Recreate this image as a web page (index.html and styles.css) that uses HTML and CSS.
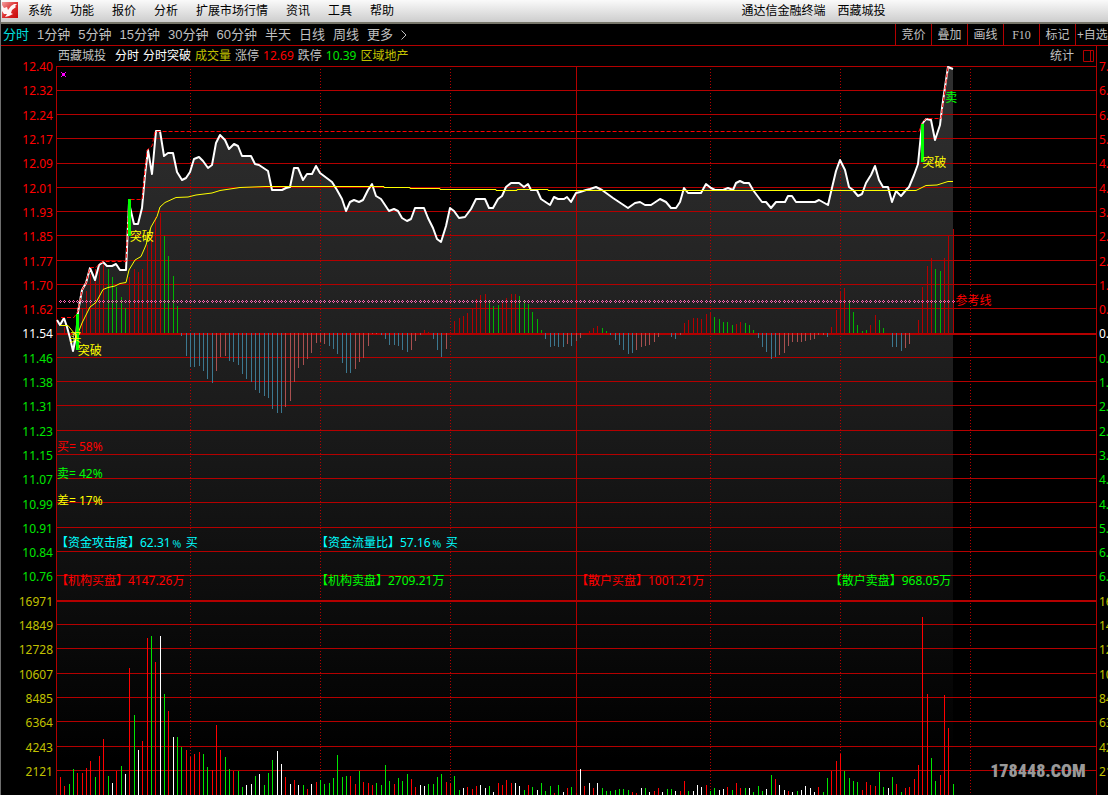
FILE: index.html
```html
<!DOCTYPE html>
<html lang="zh-CN">
<head>
<meta charset="utf-8">
<title>通达信金融终端 西藏城投</title>
<link rel="stylesheet" href="styles.css">
</head>
<body>
<div class="app">
  <header class="menubar">
    <svg class="logo" viewBox="0 0 16 16" aria-hidden="true">
      <defs><linearGradient id="logoRed" x1="0" y1="0" x2="1" y2="1"><stop offset="0" stop-color="#f3a0a0"/><stop offset=".5" stop-color="#dc3030"/><stop offset="1" stop-color="#c80808"/></linearGradient></defs>
      <rect width="16" height="16" fill="url(#logoRed)"/>
      <path d="M0 3L2 6L5 5L6 8L9 4L12 2L15 2L13 4L14 5L10 8L9 11L11 12L7 14L3 15L5 12L2 12L0 9Z" fill="#fff5f5"/>
    </svg>
    <nav class="menu">
      <button>系统</button><button>功能</button><button>报价</button><button>分析</button><button>扩展市场行情</button><button>资讯</button><button>工具</button><button>帮助</button>
    </nav>
    <h1 class="title"><span>通达信金融终端</span><span>西藏城投</span></h1>
  </header>

  <div class="toolbar">
    <nav class="periods">
      <button class="active">分时</button><button>1分钟</button><button>5分钟</button><button>15分钟</button><button>30分钟</button><button>60分钟</button><button>半天</button><button>日线</button><button>周线</button><button>更多</button>
      <button aria-label="展开"><svg class="chevron" viewBox="0 0 6 10"><path d="M.5 .5L5 5L.5 9.500"/></svg></button>
    </nav>
    <div class="tools">
      <button>竞价</button><button>叠加</button><button>画线</button><button class="latin">F10</button><button>标记</button><button class="last">+自选</button>
    </div>
  </div>

  <main class="workspace">
    <ol class="axis axis-left" id="axisLeft"></ol>
    <section class="center">
      <div class="info">
        <span class="stock">西藏城投</span>
        <span class="white">分时</span>
        <span class="white">分时突破</span>
        <span class="olive">成交量</span>
        <span>涨停</span><span class="up num">12.69</span>
        <span>跌停</span><span class="down num">10.39</span>
        <span class="olive">区域地产</span>
        <button class="stat">统计</button>
        <button class="pane" aria-label="侧栏"><svg viewBox="0 0 11 12"><path d="M.5 .5H10.500V11.500H.5ZM7.500 .5V11.500"/></svg></button>
      </div>
      <div class="plot">
        <svg id="chart" class="chart" viewBox="56 66 1040 729" preserveAspectRatio="none" role="img" aria-label="分时走势与成交量">
          <defs><linearGradient id="shade" gradientUnits="userSpaceOnUse" x1="0" y1="66" x2="0" y2="760"><stop offset="0" stop-color="#303030"/><stop offset=".5" stop-color="#1b1b1b"/><stop offset="1" stop-color="#000"/></linearGradient></defs>
          <path id="area" fill="url(#shade)"/>
          <g id="grid" class="grid"></g>
          <g id="osc" class="bars"></g>
          <g id="vol" class="bars"></g>
          <path id="ref" class="refline"/>
          <path id="price" class="price"/>
          <path class="average" d="M60 325.500H68L74 333L77 336L82 323L90 307L96 302.500L103 289.500L108 287.500L115 286L120 283.500L126 282.500L129 270L135 260L141 256.500L146 245L151 227L157 216.500L160 207L165 202.500L176 197.500L188 197L196 195L212 193L220 190.500L240 187.500L266 186.500H384V187.500H410V188.500H440V189.500H496V190.500H517V189.500H548V190.500H916L926 185.500L937 185L948 181.500H953"/>
          <path class="high" d="M61 317.500H74L78 311L82 290L86 283L90 267.500H96L100 263L104 261.500H126L129 199.500H142L147 150L152 146L155 131.500H919L922 123L926 118.500H941L948 67"/>
          <path class="breakout" d="M76 314h3v36h-3zM128 199h3v37h-3zM921 124h3v38h-3z"/>
          <path class="marker" d="M61 72h1v1h-1zM65 72h1v1h-1zM62 73h3v3h-3zM61 76h1v1h-1zM65 76h1v1h-1z"/>
        </svg>
        <span class="tag yellow" id="t1">买</span>
        <span class="tag yellow" id="t2">突破</span>
        <span class="tag yellow" id="t3">突破</span>
        <span class="tag yellow" id="t4">突破</span>
        <span class="tag lime" id="t5">卖</span>
        <span class="tag red" id="t6">参考线</span>
        <ul class="ratio">
          <li class="red">买= 58%</li>
          <li class="lime">卖= 42%</li>
          <li class="yellow">差= 17%</li>
        </ul>
        <div class="flows flows-main"><span class="cyan">【资金攻击度】62.31﹪ 买</span><span class="cyan">【资金流量比】57.16﹪ 买</span></div>
        <div class="flows flows-orders"><span class="red">【机构买盘】4147.26万</span><span class="lime">【机构卖盘】2709.21万</span><span class="red">【散户买盘】1001.21万</span><span class="lime">【散户卖盘】968.05万</span></div>
        <span class="watermark">178448.COM</span>
      </div>
    </section>
    <ol class="axis axis-right" id="axisRight"></ol>
  </main>
</div>
<script src="chart.js"></script>
</body>
</html>
```
FILE: styles.css
```css
* { box-sizing: border-box; }
body {
  margin: 0;
  background: #000;
  color: #c0c0c0;
  font: 12px/16px "Noto Sans", "Noto Sans CJK SC", sans-serif;
}
button {
  padding: 0;
  border: 0;
  background: none;
  color: inherit;
  font: inherit;
  white-space: nowrap;
}
ol, ul { margin: 0; padding: 0; list-style: none; }

.app {
  display: flex;
  flex-direction: column;
  height: 100vh;
  overflow: hidden;
  border-left: 1px solid #6e6e6e;
}

.menubar {
  display: flex;
  align-items: center;
  flex: none;
  height: 24px;
  padding: 0 20% 0 1px;
  border-bottom: 2px solid #77766a;
  background: linear-gradient(#fafafa, #cdcdcd);
  color: #000;
}
.logo { width: 16px; height: 16px; margin-bottom: 2px; }
.menu { display: flex; gap: 18px; margin-left: 10px; }
.title {
  display: flex;
  gap: 12px;
  margin: 0 1px 0 auto;
  font-size: 12px;
  line-height: 16px;
  font-weight: 400;
}

.toolbar {
  display: flex;
  justify-content: space-between;
  flex: none;
  height: 22px;
  border-bottom: 1px solid #b40000;
}
.periods {
  display: flex;
  align-items: center;
  gap: 8px;
  padding-left: 2px;
  font-family: "Liberation Sans", "Noto Sans CJK SC", sans-serif;
  font-size: 13px;
}
.active { color: #00e0e0; }
.chevron { display: block; width: 6px; height: 10px; fill: none; stroke: #c0c0c0; }
.tools { display: flex; }
.tools button { width: 36px; border-left: 1px solid #b40000; }
.tools .last { width: 33px; padding-left: 1px; text-align: left; }
.tools .latin { font-family: "Liberation Serif", serif; }

.workspace {
  display: grid;
  grid-template-columns: 55px minmax(0, 1fr) 11px;
  flex: 1;
  min-height: 0;
}
.axis {
  display: grid;
  grid-auto-rows: 1fr;
  align-items: center;
  padding: 9px 0 11px;
}
.axis li { line-height: 16px; }
.axis-left { padding-right: 3px; text-align: right; }
.axis-right { padding-left: 2px; overflow: hidden; }

.center {
  display: flex;
  flex-direction: column;
  border-right: 1px solid #b40000;
}
.info {
  display: flex;
  align-items: center;
  flex: none;
  gap: 4px;
  height: 20px;
  padding: 0 2px;
  white-space: nowrap;
}
.stock { margin-right: 5px; }
.stat { margin-left: auto; }
.pane svg { display: block; width: 11px; height: 12px; margin-left: 5px; fill: none; stroke: #b40000; }
.white { color: #fff; }
.olive { color: #c0c000; }
.up, .red { color: #f00; }
.down { color: #00e600; }
.lime { color: #0f0; }
.yellow { color: #ff0; }
.cyan { color: #0ff; }

.plot { position: relative; flex: 1; min-height: 0; }
.chart { position: absolute; inset: 0; width: 100%; height: 100%; }
.grid, .bars, .breakout, .marker, .refline { shape-rendering: crispEdges; }
.grid { fill: none; stroke: #b40000; }
.dotted { stroke-dasharray: 1 2; }
.price { fill: none; stroke: #fff; stroke-width: 2; stroke-linejoin: round; }
.average { fill: none; stroke: #ff0; }
.high { fill: none; stroke: #f00; stroke-dasharray: 4 2; }
.breakout { fill: #0f0; }
.marker { fill: #f0f; }
.refline { fill: #ff64b4; }

.tag { position: absolute; line-height: 14px; white-space: nowrap; }
#t1 { left: 1.3%; top: 36.3%; }
#t2 { left: 2.1%; top: 38.1%; }
#t3 { left: 7.1%; top: 22.5%; }
#t4 { left: 83.3%; top: 12.3%; }
#t5 { left: 85.5%; top: 3.4%; }
#t6 { left: 86.5%; top: 31.3%; }

.ratio {
  position: absolute;
  top: 51.2%;
  left: 1px;
  display: grid;
  gap: 11px;
}
.flows {
  position: absolute;
  right: 0;
  left: 0;
  display: grid;
  grid-template-columns: 25% 25% 24.4% 1fr;
  white-space: nowrap;
}
.flows-main { top: 64.3%; }
.flows-orders { top: 69.5%; }
.watermark {
  position: absolute;
  right: 1%;
  bottom: 1.6%;
  color: #999;
  font: 900 18px/24px "Roboto Condensed", "Liberation Sans", sans-serif;
}
```
FILE: chart.js
```js
const NS = 'http://www.w3.org/2000/svg';
const byId = id => document.getElementById(id);

// Axes
const prices = '12.40 12.32 12.24 12.17 12.09 12.01 11.93 11.85 11.77 11.70 11.62 11.54 11.46 11.38 11.31 11.23 11.15 11.07 10.99 10.91 10.84 10.76'.split(' ');
const volumes = '16971 14849 12728 10607 8485 6364 4243 2121'.split(' ');
function label(list, text, color) {
  const li = document.createElement('li');
  li.textContent = text;
  li.className = color;
  list.append(li);
}
prices.forEach((p, i) => {
  const color = i < 11 ? 'up' : i > 11 ? 'down' : 'white';
  label(byId('axisLeft'), p, color);
  label(byId('axisRight'), (Math.abs(11 - i) * 0.676).toFixed(2) + '%', color);
});
volumes.forEach(v => {
  label(byId('axisLeft'), v, 'olive');
  label(byId('axisRight'), v, 'olive');
});

// Grid
function stroke(parent, d, width, cls) {
  const p = document.createElementNS(NS, 'path');
  p.setAttribute('d', d);
  p.setAttribute('stroke-width', width);
  if (cls) p.setAttribute('class', cls);
  parent.append(p);
  return p;
}
[66, 90, 114, 138, 163, 187, 211, 235, 260, 284, 308, 357, 381, 405, 430, 454, 478, 502, 527, 551, 575, 624, 648, 673, 697, 721, 746, 770]
  .forEach(y => stroke(byId('grid'), `M56 ${y + 0.5}H1096`, 1));
[334, 601].forEach(y => stroke(byId('grid'), `M56 ${y}H1096`, 2));
[56, 576].forEach(x => stroke(byId('grid'), `M${x + 0.5} 66V795`, 1));
[190, 320, 450, 710, 840, 970].forEach(x => stroke(byId('grid'), `M${x + 0.5} 69V795`, 1, 'dotted'));

// One bar per sample: colour letter followed by its height
const xAt = i => Math.round(60 + i * 13 / 3);
const colors = { r: '#b40000', g: '#00b400', t: '#3c7890', p: '#a85050', R: '#ff0000', G: '#00e600', W: '#ffffff' };
function bars(id, text, base) {
  text.trim().split(/\s+/).forEach((s, i) => {
    const h = Number(s.slice(1));
    const d = 'tp'.includes(s[0]) ? h : -h;
    stroke(byId(id), `M${xAt(i) + 0.5} ${base}v${d}`, 1).setAttribute('stroke', colors[s[0]]);
  });
}
bars('osc', `r0 r6 r0 t16 r0 r24 r42 r59 r64 r65 r69 g64 g56 g46 g36 g25 r56 r64 r61 r64 r88 r98 r116 r120 g97 g77 g57 g27 t3 t23
 t34 t34 t33 t38 t46 t50 p38 p24 p23 t28 t29 t32 t41 t46 t49 t57 t60 t63 t65 t76 t80 t80 p74 p68 p49 p35 p32 p26 p20 p10
 p9 p11 t13 t16 t21 t30 t40 t40 p36 p29 p25 p13 p1 p1 t2 t6 t12 t12 t13 t17 t19 p17 p8 p2 r3 r1 t6 t17 t24 p16
 r1 r12 r15 r17 r20 r24 r34 r38 r39 g33 g27 g28 r31 r35 r39 r39 g37 g32 g29 g21 g14 g3 t6 t14 t13 t14 t14 p11 t13 p8
 p5 r0 r2 r5 r7 g5 g2 t2 t7 t12 t17 t21 t20 p17 p14 p13 p12 p9 p4 r0 r0 t4 t6 p2 r10 r13 r15 r15 r14 r19
 r21 g16 g14 g11 g11 g8 r9 r11 g10 g8 g3 t5 t14 t19 t26 t24 p22 p20 p13 p9 p9 p9 p8 p7 p6 p2 p2 t4 r6 r23
 r42 r45 g33 g21 g8 g2 g3 r8 r18 g13 g5 r0 t14 t14 t18 p15 p11 r0 r13 r46 r67 r75 g64 g62 r75 r98 r104`, 333);
bars('vol', `R18 R9 G11 G26 R22 R22 R27 R34 G18 R39 R56 G19 W12 R24 G29 W21 R127 G80 W45 R54 R157 G159 R133 W159 G101 R84 W58 G58 G48 R45
 R38 R41 R43 G41 G28 R25 R70 R45 G38 G26 R24 G24 G8 W10 W11 G19 W21 G10 G22 G35 W44 W31 R18 W11 R15 W10 G10 R6 W11 R13
 G15 G11 G12 G17 G40 G18 G19 R19 R11 G24 R13 R12 R10 G12 G10 G30 G14 R11 G17 G14 G21 R16 R8 W10 W9 G11 G11 G18 G21 R13
 R12 G19 G5 W7 R8 R6 R9 W10 W7 G9 W3 R12 R10 R15 R12 W12 W9 G5 R10 G8 W5 G12 G4 G9 R2 G10 W3 R7 G8 R2
 W26 R9 W12 R7 W12 G7 G4 G4 G5 G6 G6 G5 R3 R2 W7 G7 W3 R4 R7 W3 G6 G6 W4 R4 R14 G4 W4 W10 W8 R10
 G4 G7 W5 W6 R8 G5 R12 R7 G7 W7 G3 G9 G4 W6 G20 R16 W10 W5 R4 W3 G4 W5 W9 W7 W3 R8 G3 G17 R24 R34
 R41 G24 G17 G14 G13 R5 R13 R10 R9 G23 G8 W7 G18 R11 G3 R7 R8 R16 R30 R178 R101 G37 G14 R20 R100 R67 G11`, 795);

// Reference line: a small ring at every sample
let rings = '';
for (let i = 0; i < 207; i++) {
  const x = xAt(i);
  rings += `M${x} 300h1v1h-1zM${x - 1} 301h1v1h-1zM${x + 1} 301h1v1h-1zM${x} 302h1v1h-1z`;
}
byId('ref').setAttribute('d', rings);

// Price curve
const points = `57,320 60,325 64,318 67,327 70,338 73,351 76,337 78,312 82,290 86,283 90,268 95,280 99,265 103,262 107,266 112,266 116,264 120,270 126,270
 129,203 134,224 138,224 142,208 145,175 148,150 152,174 156,131 160,131 164,156 168,153 173,153 177,172 182,180 186,178 190,172 194,159 199,157 203,161 208,168 212,165
 216,143 220,135 225,140 229,149 234,144 238,146 242,156 251,156 255,164 259,165 268,171 272,190 282,190 286,188 290,187 294,168 298,168 303,180 307,174 312,174
 316,166 320,173 332,182 337,190 342,199 346,211 350,202 354,200 359,202 363,200 368,190 372,184 376,196 381,199 385,205 389,211 394,209 398,211 402,218
 407,221 411,219 415,208 424,208 428,218 433,228 437,239 441,242 446,226 450,208 454,211 459,218 465,217 471,209 476,199 485,199 489,208 493,208 498,199
 502,196 506,187 511,183 519,183 524,187 528,184 531,190 537,190 541,199 550,205 554,197 558,199 564,199 567,197 571,202 576,193 580,192 586,190 590,189
 596,187 602,190 613,198 628,208 635,203 640,202 645,205 651,205 660,199 666,202 671,208 676,208 680,202 684,188 688,193 701,193 706,184 711,188 715,190
 723,190 728,188 733,190 736,183 740,181 744,183 749,183 753,190 762,202 766,202 771,208 776,202 785,202 788,196 792,196 796,202 815,202 819,200 828,205
 831,192 836,171 840,160 845,170 849,187 853,190 858,196 862,194 866,183 871,175 875,166 879,180 883,187 888,187 892,202 896,191 901,196 906,190 909,187
 914,175 918,164 922,124 926,119 931,120 935,140 940,125 942,108 945,87 948,67 953,69`.trim().split(/\s+/);
byId('price').setAttribute('d', 'M' + points.join('L'));
byId('area').setAttribute('d', 'M' + points.join('L') + 'V795H57Z');
```
